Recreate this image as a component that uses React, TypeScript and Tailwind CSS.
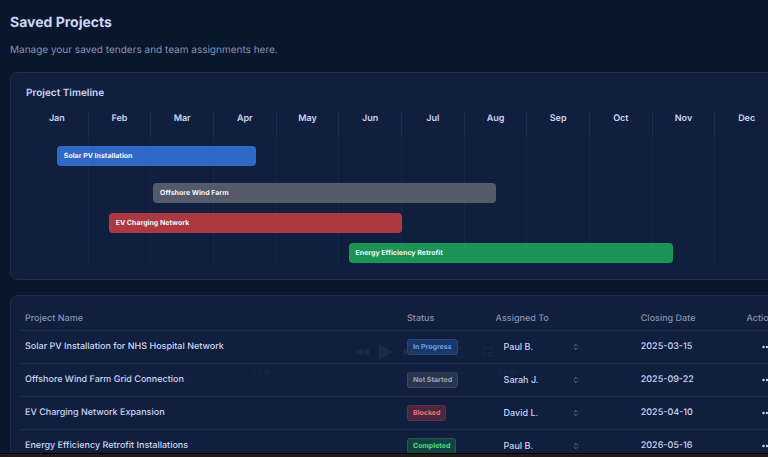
import { ChevronsUpDown, MoreHorizontal, PictureInPicture2, Share } from 'lucide-react'

const months = ['Jan', 'Feb', 'Mar', 'Apr', 'May', 'Jun', 'Jul', 'Aug', 'Sep', 'Oct', 'Nov', 'Dec']

// start and length are percentages of the year
const bars = [
    { name: 'Solar PV Installation', start: 4.1, length: 26.5, style: 'bg-[#3b82f6]/75 border-[#3b82f6]/10 mb-[17px]' },
    { name: 'Offshore Wind Farm', start: 16.9, length: 45.6, style: 'bg-[#6b6f7a]/75 border-[#6b7280]/10 mb-2.5' },
    { name: 'EV Charging Network', start: 11.0, length: 39, style: 'bg-[#ef4444]/70 border-[#ef4444]/10 mb-2.5' },
    { name: 'Energy Efficiency Retrofit', start: 42.9, length: 43.2, style: 'bg-[#22c55e]/70 border-[#22c55e]/10' },
]

const statusStyles: Record<string, string> = {
    'In Progress': 'bg-[#1a3767] border-[#20498a] text-[#60a5fa]',
    'Not Started': 'bg-[#283450] border-[#3a4661] text-[#9ca3af]',
    'Blocked': 'bg-[#48273f] border-[#6e2d40] text-[#f87171]',
    'Completed': 'bg-[#144243] border-[#196047] text-[#4ade80]',
}

const team = ['Paul B.', 'Sarah J.', 'David L.']

const projects = [
    { name: 'Solar PV Installation for NHS Hospital Network', status: 'In Progress', assignee: 'Paul B.', closing: '2025-03-15' },
    { name: 'Offshore Wind Farm Grid Connection', status: 'Not Started', assignee: 'Sarah J.', closing: '2025-09-22' },
    { name: 'EV Charging Network Expansion', status: 'Blocked', assignee: 'David L.', closing: '2025-04-10' },
    { name: 'Energy Efficiency Retrofit Installations', status: 'Completed', assignee: 'Paul B.', closing: '2026-05-16' },
]

function Timeline() {
    return (
        <section className="rounded-lg border border-[#1d2d4d] bg-[#101f3d] px-[15px] pt-3 pb-4">
            <h2 className="text-[10px] leading-4 font-semibold text-[#ccd6f6]">Project Timeline</h2>
            <div className="mt-2.5 grid grid-cols-12">
                {months.map((month) => (
                    <div
                        key={month}
                        className="h-[25px] border-r border-[#1d2d4d] text-center text-[9px] leading-4 font-semibold text-[#ccd6f6] last:border-r-0"
                    >
                        {month}
                    </div>
                ))}
            </div>
            <div className="relative pt-2.5">
                <div className="absolute inset-0 grid grid-cols-12">
                    {months.map((month) => (
                        <div key={month} className="border-r border-[#162643] last:border-r-0" />
                    ))}
                </div>
                <div className="relative">
                    {bars.map((bar) => (
                        <div
                            key={bar.name}
                            className={`flex h-5 items-center rounded-[4px] border px-1.5 text-[7px] font-bold text-[#f1f5f9] ${bar.style}`}
                            style={{ marginLeft: `${bar.start}%`, width: `${bar.length}%` }}
                        >
                            {bar.name}
                        </div>
                    ))}
                </div>
            </div>
        </section>
    )
}

function ProjectsTable() {
    return (
        <section className="rounded-lg border border-[#1d2d4d] bg-[#101f3d] px-[9px] pt-[9px]">
            <table className="w-full table-fixed border-collapse text-left text-[9px] text-[#ccd6f6]">
                <colgroup>
                    <col className="w-[50%]" />
                    <col className="w-[11.6%]" />
                    <col className="w-[19%]" />
                    <col className="w-[13%]" />
                    <col />
                </colgroup>
                <thead>
                    <tr className="h-[25px] border-b border-[#1d2d4d] text-[#8892b0]">
                        <th className="px-[5px] pt-0.5 font-medium">Project Name</th>
                        <th className="px-[5px] pt-0.5 font-medium">Status</th>
                        <th className="px-[5px] pt-0.5 font-medium">Assigned To</th>
                        <th className="px-[5px] pt-0.5 font-medium">Closing Date</th>
                        <th className="px-[5px] pt-0.5 text-right font-medium">Actions</th>
                    </tr>
                </thead>
                <tbody>
                    {projects.map((project) => (
                        <tr key={project.name} className="h-[33px] border-b border-[#1d2d4d]">
                            <td className="px-[5px] font-medium">{project.name}</td>
                            <td className="px-[5px]">
                                <div className="flex">
                                    <span
                                        className={`rounded-[3px] border px-[5px] text-[7px] leading-[14px] font-bold ${statusStyles[project.status]}`}
                                    >
                                        {project.status}
                                    </span>
                                </div>
                            </td>
                            <td className="px-[5px]">
                                <div className="relative w-[88px]">
                                    <select
                                        aria-label={`Assignee for ${project.name}`}
                                        defaultValue={project.assignee}
                                        className="block h-5 w-full appearance-none bg-transparent px-2 text-[9px] font-medium"
                                    >
                                        {team.map((member) => (
                                            <option key={member}>{member}</option>
                                        ))}
                                    </select>
                                    <ChevronsUpDown className="pointer-events-none absolute top-1.5 right-1 h-2 w-2 text-[#8892b0]" />
                                </div>
                            </td>
                            <td className="px-[5px] font-medium">{project.closing}</td>
                            <td className="px-[5px]">
                                <button
                                    aria-label={`Actions for ${project.name}`}
                                    className="ml-auto flex h-5 w-6 items-center justify-center"
                                >
                                    <MoreHorizontal className="h-3 w-3" strokeWidth={3} />
                                </button>
                            </td>
                        </tr>
                    ))}
                </tbody>
            </table>
        </section>
    )
}

// Faded-out playback controls floating over the table
function PlayerControls() {
    return (
        <div className="pointer-events-none absolute top-[342px] left-[252px] w-[266px] text-[#2f3b54] opacity-40">
            <div className="flex h-5 items-center pl-[102px]">
                <svg viewBox="0 0 16 10" className="h-2.5 w-4" fill="currentColor">
                    <path d="M8 1v8L1 5zM15 1v8L8 5z" />
                </svg>
                <svg viewBox="0 0 16 18" className="ml-2 h-[18px] w-4" fill="currentColor">
                    <path d="M1 1l14 8-14 8z" />
                </svg>
                <svg viewBox="0 0 16 10" className="ml-2 h-2.5 w-4" fill="currentColor">
                    <path d="M1 1v8l7-4zM8 1v8l7-4z" />
                </svg>
                <Share className="ml-9 h-3 w-3" />
                <PictureInPicture2 className="ml-4 h-3 w-3" />
            </div>
            <div className="flex items-center gap-2 text-[7px] leading-5">
                <span>02:14</span>
                <div className="h-px flex-1 bg-[#1b2943]" />
                <span>02:45</span>
            </div>
        </div>
    )
}

export default function App() {
    return (
        <div className="relative flex h-screen flex-col overflow-hidden bg-[#09172d] font-['Inter',sans-serif] [text-rendering:geometricPrecision]">
            <main className="min-h-0 flex-1 overflow-hidden pt-3 pl-2.5">
                <h1 className="text-[14px] leading-[22px] font-bold text-[#ccd6f6]">Saved Projects</h1>
                <p className="mt-2 text-[10px] leading-4 text-[#8892b0]">
                    Manage your saved tenders and team assignments here.
                </p>
                {/* Panels run past the right edge of the window */}
                <div className="mt-3.5 -mr-[26px] flex flex-col gap-[15px]">
                    <Timeline />
                    <ProjectsTable />
                </div>
            </main>
            <PlayerControls />
            <div className="h-1 shrink-0 border-t border-black bg-[#211b1a]" />
        </div>
    )
}
